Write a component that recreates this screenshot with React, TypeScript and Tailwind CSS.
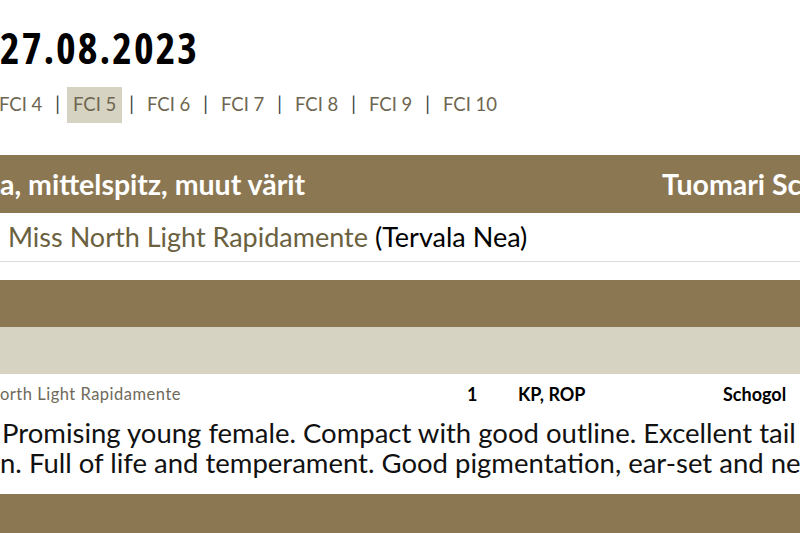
const groups = ['FCI 4', 'FCI 5', 'FCI 6', 'FCI 7', 'FCI 8', 'FCI 9', 'FCI 10'];

function Nav() {
  return (
    <div className="flex items-center h-[36px] mt-[17px] ml-[-7px] text-[18.5px] text-[#6e6650]">
      {groups.map((g, i) => (
        <div key={g} className="flex items-center">
          {i > 0 && <span className="mx-[7px] text-[#3a3a3a]">|</span>}
          <span className={'px-[6px] h-[36px] flex items-center ' + (g === 'FCI 5' ? 'bg-[#d6d3c2]' : '')}>{g}</span>
        </div>
      ))}
    </div>
  );
}

export default function App() {
  return (
    <div className="w-[800px] h-[533px] overflow-hidden bg-white font-['Lato',sans-serif]">
      <h1 className="pt-[26px] text-[42px] leading-[44px] font-bold text-black font-['Open_Sans',sans-serif] font-stretch-75% tracking-[2px]">27.08.2023</h1>
      <Nav />
      <div className="mt-[32px]">
        <div className="flex h-[58px] items-center bg-[#8b7853] text-white text-[28.5px] font-bold whitespace-nowrap">
          <div className="w-[662px] shrink-0">a, mittelspitz, muut värit</div>
          <div>Tuomari Schogol</div>
        </div>
        <div className="flex h-[49px] items-center border-b border-[#dcdcd6] pl-[8px] text-[27px] whitespace-nowrap">
          <span className="text-[#6b6140]">Miss North Light Rapidamente</span>
          <span className="ml-[7px] text-black">(Tervala Nea)</span>
        </div>
        <div className="h-[18px]" />
        <div className="h-[47px] bg-[#8b7853]" />
        <div className="h-[47px] bg-[#d6d3c3]" />
        <div className="flex h-[40px] items-center whitespace-nowrap">
          <div className="w-[467px] shrink-0 text-[16.5px] tracking-[0.5px] text-[#6e6a5a]">orth Light Rapidamente</div>
          <div className="w-[51px] shrink-0 text-[18px] font-bold text-black">1</div>
          <div className="w-[205px] shrink-0 text-[18px] font-bold text-black">KP, ROP</div>
          <div className="text-[18px] font-bold text-black">Schogol</div>
        </div>
        <div className="h-[80px] pt-[4px] text-[27.5px] leading-[30px] text-[#111] whitespace-nowrap">
          <div className="pl-[2px]">Promising young female. Compact with good outline. Excellent tail</div>
          <div>n. Full of life and temperament. Good pigmentation, ear-set and neck</div>
        </div>
        <div className="h-[60px] bg-[#8b7853]" />
      </div>
    </div>
  );
}
